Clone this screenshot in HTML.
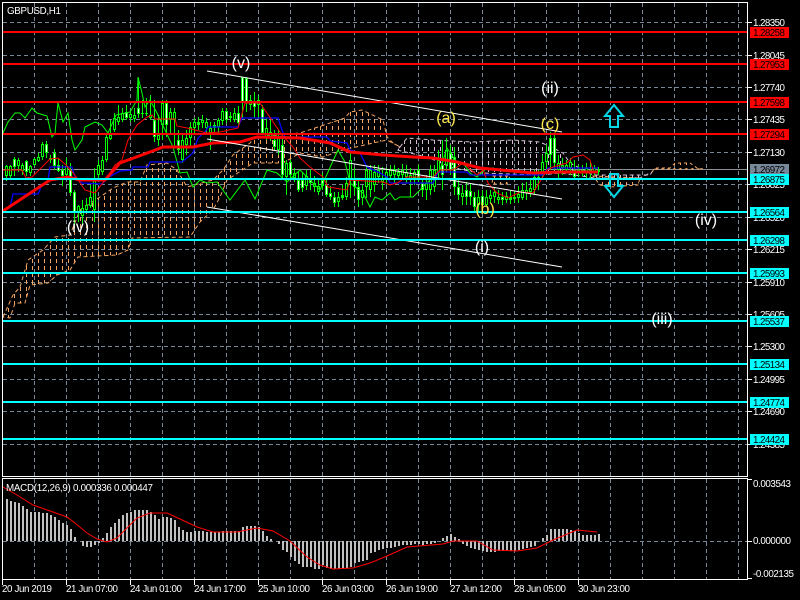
<!DOCTYPE html>
<html lang="en">
<head>
<meta charset="utf-8">
<title>GBPUSD,H1</title>
<style>
html,body{margin:0;padding:0;background:#000;width:800px;height:600px;overflow:hidden}
svg{display:block}
text{font-family:"Liberation Sans",sans-serif;font-size:9.8px;fill:#fff}
.big{font-size:16px}
.y{fill:#ffe94a}
.b{fill:#000}
</style>
</head>
<body>
<svg xmlns="http://www.w3.org/2000/svg" width="800" height="600" viewBox="0 0 800 600">
<defs>
<pattern id="hO" patternUnits="userSpaceOnUse" x="2" y="0" width="6" height="7"><rect x="0" y="0" width="1" height="4" fill="#f4a460"/></pattern>
<pattern id="hP" patternUnits="userSpaceOnUse" x="2" y="0" width="6" height="7"><rect x="0" y="0" width="1" height="4" fill="#d8bfd8"/></pattern>
</defs>
<rect width="800" height="600" fill="#000"/>

<!-- grid -->
<path fill="none" stroke="#778899" stroke-width="1" stroke-dasharray="4 3" d="M34.5 3V476M66.5 3V476M98.5 3V476M130.5 3V476M162.5 3V476M194.5 3V476M226.5 3V476M258.5 3V476M290.5 3V476M322.5 3V476M354.5 3V476M386.5 3V476M418.5 3V476M450.5 3V476M482.5 3V476M514.5 3V476M546.5 3V476M578.5 3V476M610.5 3V476M642.5 3V476M674.5 3V476M706.5 3V476M738.5 3V476M3 22.5H747M3 55.5H747M3 87.5H747M3 119.5H747M3 152.5H747M3 184.5H747M3 217.5H747M3 249.5H747M3 282.5H747M3 314.5H747M3 346.5H747M3 379.5H747M3 411.5H747M3 444.5H747"/>
<path fill="none" stroke="#778899" stroke-width="1" stroke-dasharray="4 3" d="M34.5 479V579M66.5 479V579M98.5 479V579M130.5 479V579M162.5 479V579M194.5 479V579M226.5 479V579M258.5 479V579M290.5 479V579M322.5 479V579M354.5 479V579M386.5 479V579M418.5 479V579M450.5 479V579M482.5 479V579M514.5 479V579M546.5 479V579M578.5 479V579M610.5 479V579M642.5 479V579M674.5 479V579M706.5 479V579M738.5 479V579M3 541.5H747"/>

<!-- gray bid line -->
<path d="M3 169.5H747" stroke="#8a8f96" stroke-width="1"/>

<!-- cloud -->
<g id="cloud">
<polygon fill="url(#hO)" stroke="#f4a460" stroke-width="1" stroke-dasharray="4 3" points="3,317 13,295 20,287 28,260 43,250 55,237 70,235 80,210 100,197 113,188 127,182 140,182 147,165 167,163 177,170 187,187 213,180 223,170 233,155 250,143 255,137 300,133 345,118 350,112 362,110 383,120 387,137 393,143 400,147 387,140 373,143 343,150 323,157 300,153 283,163 253,163 227,180 220,197 213,210 200,222 190,237 132,238 128,250 117,255 78,257 70,270 57,275 48,283 30,285 25,303 15,303 10,318"/>
<polygon fill="url(#hP)" stroke="#d8bfd8" stroke-width="1" stroke-dasharray="4 3" points="400,147 407,138 433,140 473,142 513,140 540,142 557,150 563,153 570,163 593,175 650,175 652,172 640,178 595,178 560,173 540,175 480,173 453,168 427,157 397,150"/>
<polygon fill="url(#hO)" stroke="#f4a460" stroke-width="1" stroke-dasharray="3 3" points="493,176 510,176 507,184 492,184"/>
<polygon fill="url(#hO)" stroke="#f4a460" stroke-width="1" stroke-dasharray="3 3" points="593,176 640,178 638,185 610,187 600,185"/>
<polygon fill="url(#hO)" stroke="#f4a460" stroke-width="1" stroke-dasharray="3 3" points="652,172 655,168 670,168 675,163 690,163 697,168 703,169 655,169"/>
</g>

<!-- candles: wicks -->
<path fill="none" stroke="#00ff00" stroke-width="1" d="M6.5 165V181M10.5 165V178M14.5 157V176M18.5 158V172M22.5 163V175M26.5 160V176M30.5 165V176M34.5 158V166M38.5 153V162M42.5 142V160M46.5 141V158M50.5 155V163M54.5 149V170M58.5 158V172M62.5 165V186M66.5 158V176M70.5 163V196M74.5 190V225M78.5 205V222M82.5 200V225M86.5 198V212M90.5 185V208M94.5 168V222M98.5 160V178M102.5 156V175M106.5 135V162M110.5 120V140M114.5 113V132M118.5 105V125M122.5 108V122M126.5 105V120M130.5 110V122M134.5 108V122M138.5 78V118M142.5 100V118M146.5 98V116M150.5 95V120M154.5 100V142M158.5 115V146M162.5 100V140M166.5 100V137M170.5 108V133M174.5 108V148M178.5 130V155M182.5 135V163M186.5 130V155M190.5 122V146M194.5 118V135M198.5 117V130M202.5 115V128M206.5 118V133M210.5 122V150M214.5 122V132M218.5 118V133M222.5 108V125M226.5 108V123M230.5 112V122M234.5 108V122M238.5 106V126M242.5 77V118M246.5 77V112M250.5 95V110M254.5 92V118M258.5 95V118M262.5 105V135M266.5 118V140M270.5 120V141M274.5 130V150M278.5 130V155M282.5 135V180M286.5 160V195M290.5 160V180M294.5 168V182M298.5 172V192M302.5 172V192M306.5 170V190M310.5 170V190M314.5 176V192M318.5 180V195M322.5 173V190M326.5 178V197M330.5 186V200M334.5 192V207M338.5 192V207M342.5 185V200M346.5 177V200M350.5 150V198M354.5 168V195M358.5 180V207M362.5 185V205M366.5 165V198M370.5 165V197M374.5 165V192M378.5 165V183M382.5 167V190M386.5 168V185M390.5 165V180M394.5 165V183M398.5 168V180M402.5 164V180M406.5 165V183M410.5 168V197M414.5 170V185M418.5 165V182M422.5 178V197M426.5 175V200M430.5 165V195M434.5 165V192M438.5 150V180M442.5 140V190M446.5 138V172M450.5 145V175M454.5 147V195M458.5 180V200M462.5 185V205M466.5 182V205M470.5 183V205M474.5 192V212M478.5 190V213M482.5 190V212M486.5 190V207M490.5 190V203M494.5 188V203M498.5 190V204M502.5 192V205M506.5 192V203M510.5 190V204M514.5 191V203M518.5 186V203M522.5 183V200M526.5 182V200M530.5 180V197M534.5 170V195M538.5 170V190M542.5 155V180M546.5 145V170M550.5 132V170M554.5 135V170M558.5 155V178M562.5 158V175M566.5 160V173M570.5 158V175M574.5 160V180M578.5 165V177M582.5 165V176M586.5 163V178M590.5 162V180M594.5 165V175M598.5 167V175"/>
<!-- candles: body outline -->
<path fill="none" stroke="#00ff00" stroke-width="3" d="M6.5 166V176M10.5 166V176M14.5 159V167M18.5 160V166M22.5 165V171M26.5 161V172M30.5 166V173M34.5 159V165M38.5 157V161M42.5 144V157M46.5 144V153M50.5 158V160M54.5 153V166M58.5 165V171M62.5 170V176M66.5 166V175M70.5 170V193M74.5 192V213M78.5 206V212M82.5 208V216M86.5 205V210M90.5 197V206M94.5 180V210M98.5 165V175M102.5 160V172M106.5 137V160M110.5 135V139M114.5 118V130M118.5 117V122M122.5 113V120M126.5 112V118M130.5 114V118M134.5 115V119M138.5 108V114M142.5 113V114M146.5 113V114M150.5 115V118M154.5 120V137M158.5 135V140M162.5 103V125M166.5 103V125M170.5 112V120M174.5 112V120M178.5 140V150M182.5 140V160M186.5 138V145M190.5 127V138M194.5 122V128M198.5 122V125M202.5 120V123M206.5 122V128M210.5 128V133M214.5 125V128M218.5 120V127M222.5 111V121M226.5 111V120M230.5 116V118M234.5 113V120M238.5 113V123M242.5 77V103M246.5 78V103M250.5 100V105M254.5 102V107M258.5 100V105M262.5 109V133M266.5 128V138M270.5 132V138M274.5 140V147M278.5 137V150M282.5 145V175M286.5 163V177M290.5 162V175M294.5 173V178M298.5 180V190M302.5 180V188M306.5 176V186M310.5 178V183M314.5 183V187M318.5 186V192M322.5 180V186M326.5 185V195M330.5 193V197M334.5 197V203M338.5 197V202M342.5 195V198M346.5 183V197M350.5 160V180M354.5 180V187M358.5 187V200M362.5 190V198M366.5 170V187M370.5 170V190M374.5 172V185M378.5 170V177M382.5 178V182M386.5 172V178M390.5 170V176M394.5 169V175M398.5 172V176M402.5 170V175M406.5 172V177M410.5 175V180M414.5 172V178M418.5 170V178M422.5 183V190M426.5 183V190M430.5 170V190M434.5 170V187M438.5 160V173M442.5 165V175M446.5 150V165M450.5 153V170M454.5 157V187M458.5 187V195M462.5 193V197M466.5 190V197M470.5 191V197M474.5 197V207M478.5 197V205M482.5 196V205M486.5 197V205M490.5 195V199M494.5 192V197M498.5 197V200M502.5 197V200M506.5 196V200M510.5 197V200M514.5 197V199M518.5 194V198M522.5 190V198M526.5 190V193M530.5 188V192M534.5 177V190M538.5 177V178M542.5 162V173M546.5 153V162M550.5 138V155M554.5 138V163M558.5 163V170M562.5 165V168M566.5 165V170M570.5 162V168M574.5 170V177M578.5 170V173M582.5 170V172M586.5 168V172M590.5 170V173M594.5 168V172M598.5 170V172"/>
<!-- candles: white centres -->
<path fill="none" stroke="#ffffff" stroke-width="1" d="M14.5 160V166M26.5 162V171M46.5 145V152M54.5 154V165M58.5 166V170M62.5 171V175M70.5 171V192M74.5 193V212M126.5 113V117M138.5 109V113M154.5 121V136M166.5 104V124M178.5 141V149M226.5 112V119M238.5 114V122M242.5 78V102M246.5 79V102M254.5 103V106M262.5 110V132M274.5 141V146M282.5 146V174M290.5 163V174M298.5 181V189M302.5 181V187M310.5 179V182M322.5 181V185M326.5 186V194M330.5 194V196M334.5 198V202M354.5 181V186M358.5 188V199M418.5 171V177M422.5 184V189M442.5 166V174M450.5 154V169M454.5 158V186M458.5 188V194M466.5 191V196M470.5 192V196M474.5 198V206M482.5 197V204M502.5 198V199M550.5 139V154M554.5 139V162M574.5 171V176"/>
<!-- candles: black centres -->
<path fill="none" stroke="#000000" stroke-width="1" d="M6.5 167V175M10.5 167V175M18.5 161V165M22.5 166V170M30.5 167V172M34.5 160V164M38.5 158V160M42.5 145V156M50.5 159V159.5M66.5 167V174M78.5 207V211M82.5 209V215M86.5 206V209M90.5 198V205M94.5 181V209M98.5 166V174M102.5 161V171M106.5 138V159M110.5 136V138M114.5 119V129M118.5 118V121M122.5 114V119M130.5 115V117M134.5 116V118M150.5 116V117M158.5 136V139M162.5 104V124M170.5 113V119M174.5 113V119M182.5 141V159M186.5 139V144M190.5 128V137M194.5 123V127M202.5 121V122M206.5 123V127M210.5 129V132M218.5 121V126M222.5 112V120M234.5 114V119M250.5 101V104M258.5 101V104M266.5 129V137M270.5 133V137M278.5 138V149M286.5 164V176M294.5 174V177M306.5 177V185M314.5 184V186M318.5 187V191M338.5 198V201M346.5 184V196M350.5 161V179M362.5 191V197M366.5 171V186M370.5 171V189M374.5 173V184M378.5 171V176M382.5 179V181M386.5 173V177M390.5 171V175M394.5 170V174M398.5 173V175M402.5 171V174M406.5 173V176M410.5 176V179M414.5 173V177M426.5 184V189M430.5 171V189M434.5 171V186M438.5 161V172M446.5 151V164M462.5 194V196M478.5 198V204M486.5 198V204M490.5 196V198M494.5 193V196M498.5 198V199M506.5 197V199M518.5 195V197M522.5 191V197M526.5 191V192M530.5 189V191M534.5 178V189M542.5 163V172M546.5 154V161M558.5 164V169M562.5 166V167M566.5 166V169M570.5 163V167M586.5 169V171M594.5 169V171"/>

<!-- chikou -->
<polyline fill="none" stroke="#00ff00" stroke-width="1" points="3,133 8,122 15,113 20,113 25,118 32,108 37,113 47,116 52,137 55,133 58,103 63,122 68,113 72,140 75,150 82,140 85,127 95,122 102,125 108,133 116,115 130,112 137,100 138,77 142,93 145,107 150,100 157,113 173,147 180,173 187,172 193,187 200,180 207,183 217,182 230,200 245,180 255,199 267,170 277,173 287,182 300,170 307,177 320,190 332,163 338,150 342,157 345,162 350,183 363,193 370,207 375,197 382,200 390,193 395,200 400,197 413,197 420,190 427,183 433,177 440,170 447,148 457,163 463,163 470,173 477,177 487,168 494,168"/>
<!-- kijun -->
<polyline fill="none" stroke="#0000ff" stroke-width="1.3" points="3,210 10,207 13,194 38,194 42,185 48,180 50,167 72,167 75,177 82,183 102,184 107,178 120,171 132,170 133,167 148,167 150,162 182,162 193,153 198,138 205,132 208,127 238,127 242,118 278,118 282,130 285,137 300,137 327,137 330,141 347,143 350,150 360,153 367,167 380,173 387,177 390,183 433,183 438,172 467,172 470,175 543,175 548,168 598,168"/>
<!-- moving average -->
<polyline fill="none" stroke="#ff0000" stroke-width="3" points="3,211 50,180 68,177 80,180 105,180 120,163 150,152 163,147 193,147 213,143 240,142 257,137 300,138 330,143 350,152 383,155 413,157 433,158 457,162 480,168 533,173 560,172 598,172"/>
<!-- tenkan -->
<polyline fill="none" stroke="#ff0000" stroke-width="1" points="3,170 22,170 26,178 32,177 42,167 50,159 58,158 66,165 74,174 78,180 85,190 95,193 105,180 115,165 122,160 128,140 137,125 147,117 152,115 155,119 175,119 177,126 187,128 207,133 220,132 238,128 245,103 260,103 267,113 282,135 293,147 300,158 310,167 323,177 328,187 347,190 350,180 383,182 390,185 397,183 407,177 433,177 440,170 453,170 463,163 477,175 483,170 488,183 497,193 508,198 520,192 533,193 547,170 553,167 567,163 573,157 583,155 590,160 593,170"/>

<!-- channel lines -->
<path stroke="#fff" stroke-width="1" fill="none" d="M207 71L562 132M207 139L562 199M207 207L562 267"/>

<!-- level lines -->
<path fill="none" stroke="#ff0000" stroke-width="2" d="M3 32H747M3 64H747M3 102H747M3 134H747"/>
<path fill="none" stroke="#00ffff" stroke-width="2" d="M3 179H747M3 212H747M3 240H747M3 273H747M3 321H747M3 364H747M3 402H747M3 439H747"/>

<!-- arrows -->
<path fill="none" stroke="#00d8e8" stroke-width="2" d="M614 105L605 116H610V127H618V116H623Z"/>
<path fill="none" stroke="#00d8e8" stroke-width="2" d="M614 197L605 186H610V174H618V186H623Z"/>

<!-- wave labels -->
<text class="big" x="241" y="68" text-anchor="middle">(v)</text>
<text class="big" x="550" y="93" text-anchor="middle">(ii)</text>
<text class="big y" x="446" y="123" text-anchor="middle">(a)</text>
<text class="big y" x="550" y="129" text-anchor="middle">(c)</text>
<text class="big y" x="485" y="214" text-anchor="middle">(b)</text>
<text class="big" x="482" y="252" text-anchor="middle">(i)</text>
<text class="big" x="78" y="232" text-anchor="middle">(iv)</text>
<text class="big" x="706" y="225" text-anchor="middle">(iv)</text>
<text class="big" x="662" y="324" text-anchor="middle">(iii)</text>

<!-- title -->
<text x="7" y="14" textLength="54" lengthAdjust="spacing">GBPUSD,H1</text>

<!-- MACD -->
<path fill="none" stroke="#c0c0c0" stroke-width="2" d="M7 499V541M11 501V541M15 502V541M19 503V541M23 506V541M27 509V541M31 512V541M35 512V541M39 512V541M43 513V541M47 513V541M51 515V541M55 517V541M59 520V541M63 523V541M67 525V541M71 529V541M75 537V541M83 541V546M87 541V547M91 541V547M95 541V545M99 541V543M103 538V541M107 533V541M111 527V541M115 523V541M119 519V541M123 515V541M127 513V541M131 512V541M135 510V541M139 510V541M143 510V541M147 510V541M151 512V541M155 515V541M159 519V541M163 517V541M167 517V541M171 518V541M175 520V541M179 527V541M183 530V541M187 532V541M191 532V541M195 531V541M199 531V541M203 531V541M207 532V541M211 532V541M215 532V541M219 532V541M223 531V541M227 531V541M231 531V541M235 531V541M239 531V541M243 527V541M247 526V541M251 526V541M255 526V541M259 527V541M263 531V541M267 536V541M271 539V541M279 541V544M283 541V550M287 541V552M291 541V557M295 541V561M299 541V564M303 541V567M307 541V567M311 541V567M315 541V569M319 541V569M323 541V565M327 541V568M331 541V569M335 541V569M339 541V569M343 541V568M347 541V568M351 541V567M355 541V563M359 541V562M363 541V561M367 541V560M371 541V553M375 541V552M379 541V550M383 541V549M387 541V548M391 541V548M395 541V547M399 541V546M403 541V545M407 541V545M411 541V545M415 541V544M419 541V544M423 541V545M427 541V544M431 541V544M435 541V543M443 538V541M447 536V541M451 534V541M455 537V541M459 539V541M463 541V544M467 541V546M471 541V548M475 541V549M479 541V550M483 541V551M487 541V552M491 541V552M495 541V552M499 541V551M503 541V551M507 541V551M511 541V551M515 541V551M519 541V550M523 541V549M527 541V548M531 541V547M535 541V546M539 541V541.5M543 538V541M547 535V541M551 529V541M555 529V541M559 529V541M563 529V541M567 529V541M571 530V541M575 531V541M579 533V541M583 535V541M587 535V541M591 535V541M595 535V541M599 534V541"/>
<polyline fill="none" stroke="#ff0000" stroke-width="1" points="3,487 17,495 33,505 50,511 67,517 75,523 87,533 97,539 107,542 117,538 127,528 137,518 150,513 167,513 180,519 197,527 213,532 237,532 257,528 273,531 290,541 307,557 320,565 333,569 353,568 370,563 387,556 407,547 443,544 453,541 477,541 493,550 517,551 537,548 553,540 577,530 597,532"/>
<text x="6" y="491" textLength="147" lengthAdjust="spacing">MACD(12,26,9) 0.000336 0.000447</text>

<!-- frames -->
<path fill="none" stroke="#fff" stroke-width="1" d="M2.5 2.5H747.5V476.5H2.5ZM2.5 478.5H747.5V579.5H2.5Z"/>

<!-- y ticks -->
<path stroke="#fff" stroke-width="1" fill="none" d="M748 22.5H752M748 55.5H752M748 87.5H752M748 119.5H752M748 152.5H752M748 184.5H752M748 217.5H752M748 249.5H752M748 282.5H752M748 314.5H752M748 346.5H752M748 379.5H752M748 411.5H752M748 444.5H752M748 479.5H752M748 541.5H752M748 578.5H752"/>
<!-- x ticks -->
<path stroke="#fff" stroke-width="1" fill="none" d="M2.5 580V585M66.5 580V585M130.5 580V585M194.5 580V585M258.5 580V585M322.5 580V585M386.5 580V585M450.5 580V585M514.5 580V585M578.5 580V585"/>

<!-- y labels -->
<g>
<text x="753" y="26" textLength="32">1.28350</text>
<text x="753" y="59" textLength="32">1.28045</text>
<text x="753" y="91" textLength="32">1.27740</text>
<text x="753" y="123" textLength="32">1.27435</text>
<text x="753" y="156" textLength="32">1.27130</text>
<text x="753" y="188" textLength="32">1.26825</text>
<text x="753" y="221" textLength="32">1.26520</text>
<text x="753" y="253" textLength="32">1.26215</text>
<text x="753" y="286" textLength="32">1.25910</text>
<text x="753" y="318" textLength="32">1.25605</text>
<text x="753" y="350" textLength="32">1.25300</text>
<text x="753" y="383" textLength="32">1.24995</text>
<text x="753" y="415" textLength="32">1.24690</text>
<text x="753" y="448" textLength="32">1.24385</text>
<text x="753" y="487" textLength="38">0.003543</text>
<text x="753" y="544" textLength="38">0.000000</text>
<text x="753" y="577" textLength="41">-0.002135</text>
</g>

<!-- price boxes -->
<g>
<rect x="750" y="27" width="39" height="11" fill="#ff0000"/><text class="b" x="753" y="36" textLength="32">1.28258</text>
<rect x="750" y="59" width="39" height="11" fill="#ff0000"/><text class="b" x="753" y="68" textLength="32">1.27953</text>
<rect x="750" y="97" width="39" height="11" fill="#ff0000"/><text class="b" x="753" y="106" textLength="32">1.27598</text>
<rect x="750" y="129" width="39" height="11" fill="#ff0000"/><text class="b" x="753" y="138" textLength="32">1.27294</text>
<rect x="750" y="164" width="39" height="11" fill="#778899"/><text class="b" x="753" y="173" textLength="32">1.26972</text>
<rect x="750" y="174" width="39" height="11" fill="#00ffff"/><text class="b" x="753" y="183" textLength="32">1.26875</text>
<rect x="750" y="207" width="39" height="11" fill="#00ffff"/><text class="b" x="753" y="216" textLength="32">1.26564</text>
<rect x="750" y="235" width="39" height="11" fill="#00ffff"/><text class="b" x="753" y="244" textLength="32">1.26298</text>
<rect x="750" y="268" width="39" height="11" fill="#00ffff"/><text class="b" x="753" y="277" textLength="32">1.25993</text>
<rect x="750" y="316" width="39" height="11" fill="#00ffff"/><text class="b" x="753" y="325" textLength="32">1.25537</text>
<rect x="750" y="359" width="39" height="11" fill="#00ffff"/><text class="b" x="753" y="368" textLength="32">1.25134</text>
<rect x="750" y="397" width="39" height="11" fill="#00ffff"/><text class="b" x="753" y="406" textLength="32">1.24774</text>
<rect x="750" y="434" width="39" height="11" fill="#00ffff"/><text class="b" x="753" y="443" textLength="32">1.24424</text>
</g>

<!-- x labels -->
<g>
<text x="2" y="592" textLength="50">20 Jun 2019</text>
<text x="66" y="592" textLength="52">21 Jun 07:00</text>
<text x="130" y="592" textLength="52">24 Jun 01:00</text>
<text x="194" y="592" textLength="52">24 Jun 17:00</text>
<text x="258" y="592" textLength="52">25 Jun 10:00</text>
<text x="322" y="592" textLength="52">26 Jun 03:00</text>
<text x="386" y="592" textLength="52">26 Jun 19:00</text>
<text x="450" y="592" textLength="52">27 Jun 12:00</text>
<text x="514" y="592" textLength="52">28 Jun 05:00</text>
<text x="578" y="592" textLength="52">30 Jun 23:00</text>
</g>
</svg>
</body>
</html>
